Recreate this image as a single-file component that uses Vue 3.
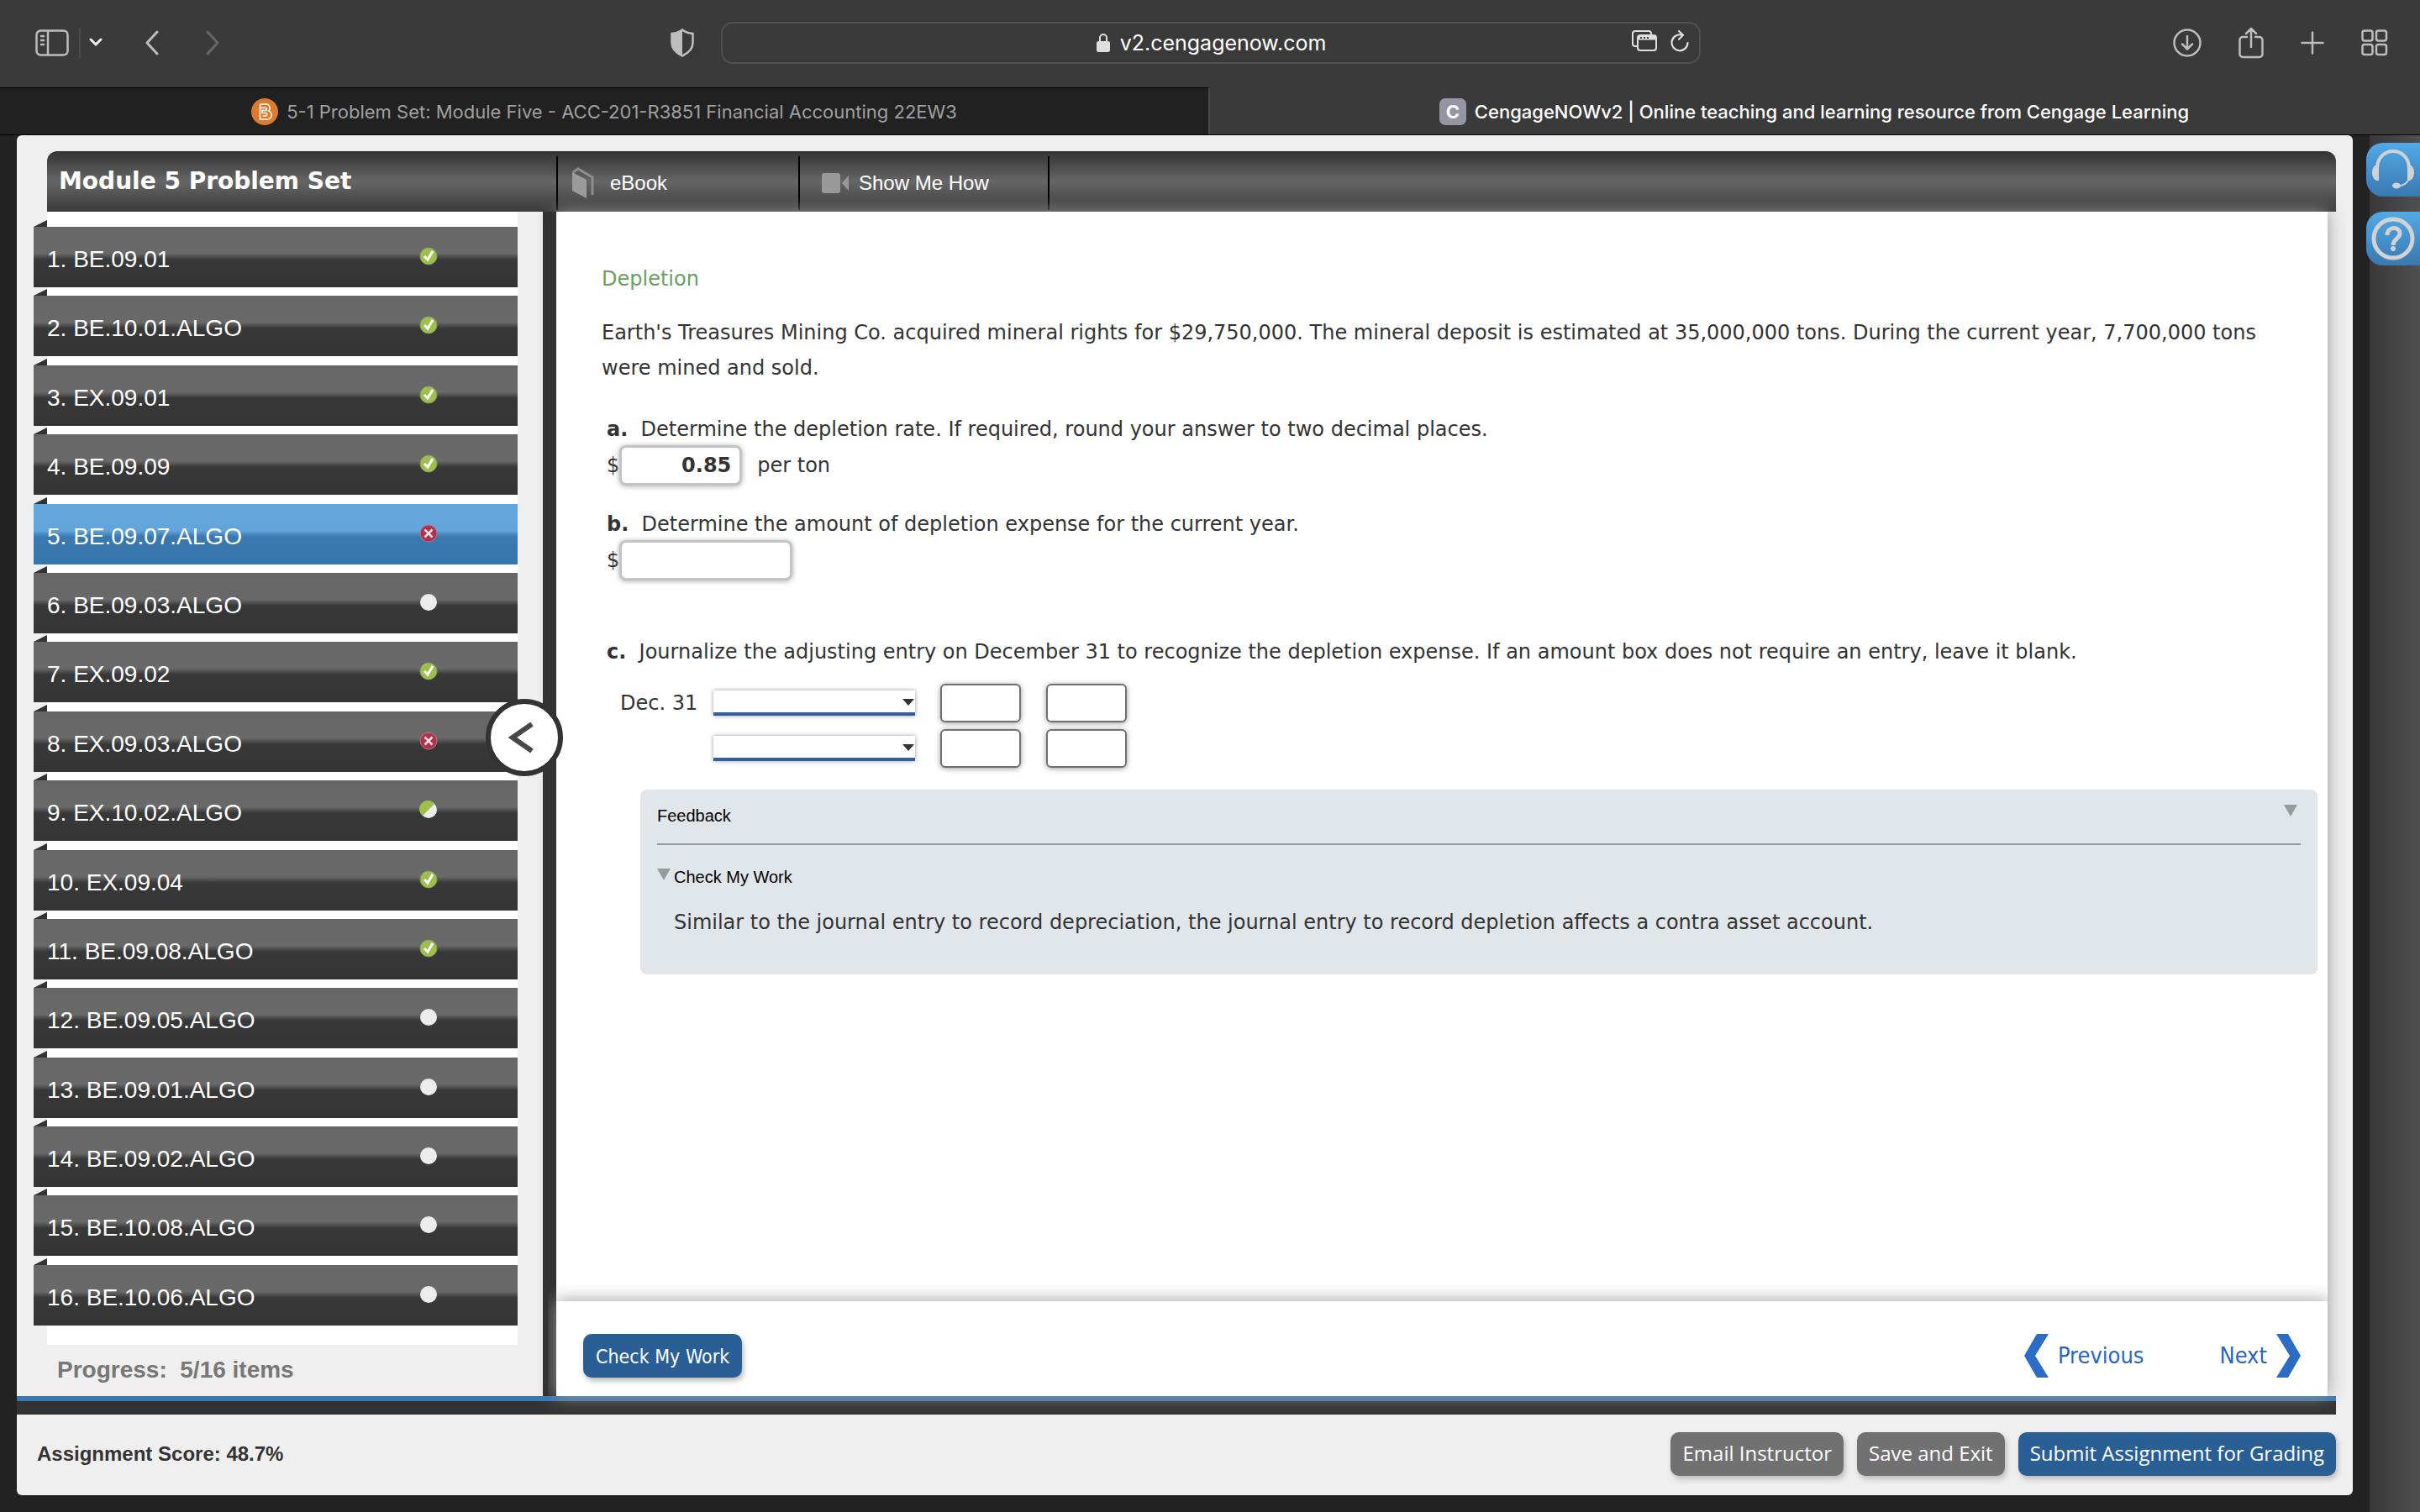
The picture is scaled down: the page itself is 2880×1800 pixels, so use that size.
<script setup>
import { ref } from 'vue'

// status: ok, wrong, empty, half
const items = [
  { name: 'BE.09.01', status: 'ok' },
  { name: 'BE.10.01.ALGO', status: 'ok' },
  { name: 'EX.09.01', status: 'ok' },
  { name: 'BE.09.09', status: 'ok' },
  { name: 'BE.09.07.ALGO', status: 'wrong' },
  { name: 'BE.09.03.ALGO', status: 'empty' },
  { name: 'EX.09.02', status: 'ok' },
  { name: 'EX.09.03.ALGO', status: 'wrong' },
  { name: 'EX.10.02.ALGO', status: 'half' },
  { name: 'EX.09.04', status: 'ok' },
  { name: 'BE.09.08.ALGO', status: 'ok' },
  { name: 'BE.09.05.ALGO', status: 'empty' },
  { name: 'BE.09.01.ALGO', status: 'empty' },
  { name: 'BE.09.02.ALGO', status: 'empty' },
  { name: 'BE.10.08.ALGO', status: 'empty' },
  { name: 'BE.10.06.ALGO', status: 'empty' }
]

const current = ref(4)
const rate = ref('0.85')
const expense = ref('')

const entries = ref([
  { date: 'Dec. 31', account: '', debit: '', credit: '' },
  { date: '', account: '', debit: '', credit: '' }
])
</script>

<template>
  <div class="browser">
    <header class="toolbar">
      <div class="tools tools-left">
        <button class="icon-btn" aria-label="Sidebar">
          <svg width="40" height="32" viewBox="0 0 40 32" fill="none" stroke="currentColor" stroke-width="2.5">
            <rect x="1.5" y="1.5" width="37" height="29" rx="5" />
            <path d="M15 2v28M6 8h5M6 13h5M6 18h5" />
          </svg>
        </button>
        <span class="tool-line"></span>
        <button class="icon-btn bright" aria-label="Tab groups">
          <svg width="16" height="12" viewBox="0 0 16 12" fill="none" stroke="currentColor" stroke-width="3" stroke-linecap="round" stroke-linejoin="round">
            <path d="M2 2l6 6 6-6" />
          </svg>
        </button>
        <button class="icon-btn back" aria-label="Back">
          <svg width="18" height="30" viewBox="0 0 18 30" fill="none" stroke="currentColor" stroke-width="3" stroke-linecap="round" stroke-linejoin="round">
            <path d="M15 2L3 15l12 13" />
          </svg>
        </button>
        <button class="icon-btn forward" aria-label="Forward">
          <svg width="18" height="30" viewBox="0 0 18 30" fill="none" stroke="currentColor" stroke-width="3" stroke-linecap="round" stroke-linejoin="round">
            <path d="M3 2l12 13L3 28" />
          </svg>
        </button>
      </div>

      <div class="address-area">
        <button class="icon-btn" aria-label="Privacy report">
          <svg width="28" height="34" viewBox="0 0 28 34">
            <path d="M14 1.5c3 2.5 7.5 4 12.5 4.5v11c0 7-5 12-12.5 15.5C6.5 29 1.5 24 1.5 17V6C6.5 5.5 11 4 14 1.5z" fill="none" stroke="currentColor" stroke-width="2.5" />
            <path d="M14 1.5v31C6.5 29 1.5 24 1.5 17V6C6.5 5.5 11 4 14 1.5z" fill="currentColor" />
          </svg>
        </button>
        <div class="address">
          <div class="address-text">
            <svg width="16" height="24" viewBox="0 0 16 24">
              <path d="M4 11V6a4 4 0 0 1 8 0v5" fill="none" stroke="#dedede" stroke-width="2" />
              <rect x="0" y="10" width="16" height="13" rx="2.5" fill="#dedede" />
            </svg>
            <span>v2.cengagenow.com</span>
          </div>
          <div class="address-tools">
            <svg width="30" height="26" viewBox="0 0 30 26" fill="none" stroke="#dedede" stroke-width="2">
              <path d="M6 19H4a3 3 0 0 1-3-3V4a3 3 0 0 1 3-3h16a3 3 0 0 1 3 3v1" />
              <rect x="7" y="6" width="22" height="18" rx="3" />
              <path d="M8 9h20" stroke-width="5" />
              <path d="M10 9h2M14 9h2M18 9h2" stroke="#3a3a3a" />
            </svg>
            <svg width="22" height="26" viewBox="0 0 22 26" fill="none" stroke="#dedede" stroke-width="2.2" stroke-linecap="round" stroke-linejoin="round">
              <path d="M13 5.5A9.5 9.5 0 1 0 20.5 15M10 1l5 4.700-5 5" />
            </svg>
          </div>
        </div>
      </div>

      <div class="tools tools-right">
        <button class="icon-btn" aria-label="Downloads">
          <svg width="34" height="34" viewBox="0 0 34 34" fill="none" stroke="currentColor" stroke-width="2.5" stroke-linecap="round" stroke-linejoin="round">
            <circle cx="17" cy="17" r="15.5" />
            <path d="M17 9v15M11 18.5l6 6 6-6" />
          </svg>
        </button>
        <button class="icon-btn" aria-label="Share">
          <svg width="30" height="38" viewBox="0 0 30 38" fill="none" stroke="currentColor" stroke-width="2.5" stroke-linecap="round" stroke-linejoin="round">
            <path d="M10 12H5a3.5 3.5 0 0 0-3.5 3.5v17A3.5 3.5 0 0 0 5 36h20a3.5 3.5 0 0 0 3.5-3.5v-17A3.5 3.5 0 0 0 25 12h-5M15 24V2M9 8l6-6 6 6" />
          </svg>
        </button>
        <button class="icon-btn" aria-label="New tab">
          <svg width="28" height="28" viewBox="0 0 28 28" fill="none" stroke="currentColor" stroke-width="2.5" stroke-linecap="round">
            <path d="M14 1.5v25M1.5 14h25" />
          </svg>
        </button>
        <button class="icon-btn" aria-label="Tab overview">
          <svg width="32" height="32" viewBox="0 0 32 32" fill="none" stroke="currentColor" stroke-width="2.5">
            <rect x="1.5" y="1.5" width="12" height="12" rx="2.5" />
            <rect x="18" y="1.5" width="12" height="12" rx="2.5" />
            <rect x="1.5" y="18" width="12" height="12" rx="2.5" />
            <rect x="18" y="18" width="12" height="12" rx="2.5" />
          </svg>
        </button>
      </div>
    </header>

    <nav class="tabs">
      <a href="#" class="tab">
        <svg width="32" height="32" viewBox="0 0 32 32">
          <circle cx="16" cy="16" r="16" fill="#dd7a2e" />
          <path d="M10.5 7h7a4.500 4.500 0 0 1 3 8 5 5 0 0 1-3 10h-7V11.500M10.500 7v4.500h6.500a1.500 1.500 0 0 1 0 3H13v3h4a1.500 1.500 0 0 1 0 3.500h-3.500" fill="none" stroke="#fff" stroke-width="1.5" />
        </svg>
        <span>5-1 Problem Set: Module Five - ACC-201-R3851 Financial Accounting 22EW3</span>
      </a>
      <a href="#" class="tab active">
        <span class="favicon">C</span>
        <span>CengageNOWv2 | Online teaching and learning resource from Cengage Learning</span>
      </a>
    </nav>

    <div class="viewport">
      <div class="frame">
        <div class="module-bar">
          <h1>Module 5 Problem Set</h1>
          <a href="#" class="module-link ebook">
            <svg width="28" height="38" viewBox="0 0 28 38">
              <path d="M1 6l17 9v22L1 28z" fill="#9b9b9b" />
              <path d="M2 6l6-4 17 10v21" fill="none" stroke="#8e8e8e" stroke-width="3" />
            </svg>
            eBook
          </a>
          <a href="#" class="module-link">
            <svg width="32" height="24" viewBox="0 0 32 24" fill="#999">
              <rect width="22" height="24" rx="3" />
              <path d="M24 12l8-9v18z" />
            </svg>
            Show Me How
          </a>
        </div>

        <div class="workspace">
          <aside class="sidebar">
            <ul class="items">
              <li v-for="(item, i) in items" :key="item.name">
                <a href="#" :class="['item', { current: i === current }]" @click.prevent="current = i">
                  <span>{{ i + 1 }}. {{ item.name }}</span>
                  <svg class="status" width="22" height="22" viewBox="0 0 22 22">
                    <circle cx="11" cy="11" r="10" :class="item.status" />
                    <path v-if="item.status === 'ok'" d="M6 11l4 4 6-10" stroke="#fff" stroke-width="3" fill="none" />
                    <path v-if="item.status === 'wrong'" d="M6.5 6.5l9 9M15.5 6.5l-9 9" stroke="#f5e6ea" stroke-width="2.5" fill="none" />
                    <path v-if="item.status === 'half'" d="M18 4A10 10 0 1 0 4 18z" fill="#9dbf4b" />
                  </svg>
                </a>
              </li>
            </ul>
            <p class="progress">Progress:&nbsp; 5/16 items</p>
          </aside>

          <div class="divider">
            <button class="collapse" aria-label="Collapse list">
              <svg width="30" height="38" viewBox="0 0 30 38" fill="none" stroke="#484848" stroke-width="6">
                <path d="M28 3L5 19l23 16" />
              </svg>
            </button>
          </div>

          <main class="content">
            <div class="question">
              <h2>Depletion</h2>
              <p class="intro">Earth's Treasures Mining Co. acquired mineral rights for $29,750,000. The mineral deposit is estimated at 35,000,000 tons. During the current year, 7,700,000 tons were mined and sold.</p>

              <div class="part">
                <label for="rate"><b>a.</b>&nbsp; Determine the depletion rate. If required, round your answer to two decimal places.</label>
                <div class="answer">
                  <span>$</span><input id="rate" v-model="rate" class="box rate" type="text"><span class="unit">per ton</span>
                </div>
              </div>

              <div class="part">
                <label for="expense"><b>b.</b>&nbsp; Determine the amount of depletion expense for the current year.</label>
                <div class="answer">
                  <span>$</span><input id="expense" v-model="expense" class="box" type="text">
                </div>
              </div>

              <p class="part-c"><b>c.</b>&nbsp; Journalize the adjusting entry on December 31 to recognize the depletion expense. If an amount box does not require an entry, leave it blank.</p>

              <table class="journal">
                <tbody>
                  <tr v-for="(entry, i) in entries" :key="i">
                    <td class="date">{{ entry.date }}</td>
                    <td class="account">
                      <div class="select-wrap">
                        <select v-model="entry.account" :aria-label="`Account ${i + 1}`">
                          <option value=""></option>
                        </select>
                        <svg class="arrow" width="14" height="8" viewBox="0 0 14 8"><path d="M0 0h14L7 8z" fill="#333" /></svg>
                      </div>
                    </td>
                    <td class="amount"><input v-model="entry.debit" type="text" :aria-label="`Debit ${i + 1}`"></td>
                    <td class="amount"><input v-model="entry.credit" type="text" :aria-label="`Credit ${i + 1}`"></td>
                  </tr>
                </tbody>
              </table>

              <section class="feedback">
                <div class="feedback-head">
                  <h3>Feedback</h3>
                  <svg width="16" height="14" viewBox="0 0 16 14"><path d="M0 0h16L8 14z" fill="#969c9e" /></svg>
                </div>
                <div class="feedback-title">
                  <svg width="16" height="14" viewBox="0 0 16 14"><path d="M0 0h16L8 14z" fill="#969c9e" /></svg>
                  <h3>Check My Work</h3>
                </div>
                <p>Similar to the journal entry to record depreciation, the journal entry to record depletion affects a contra asset account.</p>
              </section>
            </div>

            <div class="actions">
              <button class="btn blue check">Check My Work</button>
              <div class="pager">
                <a href="#">
                  <svg width="30" height="52" viewBox="0 0 30 52" fill="#2b6cc4"><path d="M15 0h14L13 26l16 26H15L0 26z" /></svg>
                  Previous
                </a>
                <a href="#">
                  Next
                  <svg width="30" height="52" viewBox="0 0 30 52" fill="#2b6cc4"><path d="M15 0H1l16 26L1 52h14l15-26z" /></svg>
                </a>
              </div>
            </div>
          </main>
        </div>

        <footer class="footer">
          <strong>Assignment Score: 48.7%</strong>
          <div class="footer-buttons">
            <button class="btn">Email Instructor</button>
            <button class="btn">Save and Exit</button>
            <button class="btn blue">Submit Assignment for Grading</button>
          </div>
        </footer>
      </div>

      <div class="backdrop">
        <button class="help" aria-label="Support">
          <svg width="54" height="54" viewBox="0 0 54 54" fill="none" stroke="#d2d2d2">
            <path d="M8 26C8 -2 46 -2 46 26" stroke-width="4" />
            <path d="M9 22v17c-8 0-8-17 0-17zM45 22v17c8 0 8-17 0-17z" fill="#d2d2d2" stroke-width="2" />
            <path d="M46 38c-2 5-7 8-14 9" stroke-width="2" />
            <ellipse cx="31" cy="46" rx="5" ry="3.5" fill="#d2d2d2" stroke="none" />
          </svg>
        </button>
        <button class="help" aria-label="Help">
          <svg width="54" height="54" viewBox="0 0 54 54" fill="none" stroke="#d2d2d2">
            <circle cx="27" cy="27" r="23" stroke-width="5" />
            <path d="M20 23c0-11 15-11 15-2 0 6-8 6-8 14" stroke-width="5" />
            <circle cx="27" cy="39" r="3" fill="#d2d2d2" stroke="none" />
          </svg>
        </button>
      </div>
    </div>
  </div>
</template>

<style>
body {
  margin: 0;
  background: #222;
}
</style>

<style scoped>
.browser {
  display: flex;
  flex-direction: column;
  min-height: 100vh;
  background: #222;
  color: #333;
  font-family: Verdana, "DejaVu Sans", sans-serif;
  font-size: 24px;
}

* {
  box-sizing: border-box;
}

svg {
  display: block;
  flex: none;
}

h1, h2, h3, p, ul {
  margin: 0;
  padding: 0;
}

a {
  color: inherit;
  text-decoration: none;
}

button, input, select {
  font: inherit;
  color: inherit;
}

/* Browser chrome */
.toolbar {
  display: grid;
  grid-template-columns: 12fr 1226px 13fr;
  align-items: center;
  height: 104px;
  padding: 0 38px 2px 42px;
  background: #3a3a3a;
}

.tools {
  display: flex;
  align-items: center;
}

.tools-right {
  justify-content: flex-end;
  gap: 44px;
}

.icon-btn {
  padding: 0;
  border: 0;
  background: none;
  color: #bdbdbd;
}

.tool-line {
  width: 2px;
  height: 36px;
  margin: 0 10px 0 12px;
  background: #4b4b4b;
}

.bright {
  color: #eee;
}

.back {
  margin-left: 50px;
}

.forward {
  margin-left: 54px;
  color: #666;
}

.address-area {
  display: flex;
  align-items: center;
  gap: 32px;
}

.address {
  display: flex;
  align-items: center;
  flex: 1;
  height: 50px;
  padding: 0 12px;
  border: 2px solid #505050;
  border-radius: 14px;
}

.address-text {
  display: flex;
  align-items: center;
  justify-content: center;
  flex: 1;
  gap: 12px;
  padding-left: 70px;
  color: #fff;
  font: 25px/32px Inter, sans-serif;
}

.address-tools {
  display: flex;
  gap: 16px;
  padding-bottom: 4px;
}

.tabs {
  display: grid;
  grid-template-columns: 1fr 1fr;
  height: 57px;
  border-bottom: 1px solid #000;
  background: #3a3a3a;
  font: 22px/28px Inter, sans-serif;
}

.tab {
  display: flex;
  align-items: center;
  justify-content: center;
  gap: 10px;
  border-top: 1px solid #000;
  border-right: 2px solid #4a4a4a;
  background: #212121;
  color: #a0a0a0;
}

.tab.active {
  border-color: #3a3a3a;
  background: #3a3a3a;
  color: #fff;
  font-weight: 500;
}

.favicon {
  width: 32px;
  height: 32px;
  border-radius: 7px;
  background: #9595a3;
  font-weight: 700;
  line-height: 32px;
  text-align: center;
}

/* Page */
.viewport {
  display: flex;
  flex: 1;
  gap: 20px;
  padding-left: 20px;
}

.frame {
  display: flex;
  flex-direction: column;
  flex: 1;
  margin-bottom: 20px;
  border-radius: 6px;
  background: #efefef;
}

.module-bar {
  display: flex;
  height: 72px;
  margin: 19px 20px 0 36px;
  border-radius: 12px 12px 0 0;
  background: linear-gradient(#333, #666 50%, #444 88%, #3a3a3a);
  color: #fff;
}

.module-bar h1 {
  width: 606px;
  padding-left: 14px;
  font-size: 28px;
  line-height: 72px;
}

.module-link {
  display: flex;
  align-items: center;
  gap: 12px;
  width: 297px;
  margin: 6px 0 2px;
  padding: 0 0 0 26px;
  border-right: 2px solid #000;
  font: 24px/30px "Liberation Sans", Arial, sans-serif;
}

.module-link.ebook {
  width: 290px;
  gap: 18px;
  padding-left: 16px;
  border-left: 2px solid #000;
}

/* blue and dark rules run under the whole workspace */
.workspace {
  display: flex;
  flex: 1;
  margin: 0 20px 22px 0;
  box-shadow: 0 6px 0 #3a78b0, 0 22px 0 #333;
}

.sidebar {
  display: flex;
  flex-direction: column;
  width: 626px;
  background: #efefef;
  font-family: "Liberation Sans", Arial, sans-serif;
  font-size: 28px;
}

.items {
  display: flex;
  flex: 1;
  flex-direction: column;
  justify-content: space-between;
  margin: 0 30px 0 36px;
  padding: 18px 0 23px;
  background: #fff;
  list-style: none;
}

.item {
  position: relative;
  display: flex;
  align-items: center;
  justify-content: space-between;
  height: 72px;
  margin-left: -16px;
  padding: 6px 95px 0 16px;
  background: linear-gradient(#666 0%, #696969 44%, #383838 54%, #343434 100%);
  color: #fff;
}

.item.current {
  background: linear-gradient(#62a7dd 0%, #62a5db 44%, #3a78b0 54%, #3876ae 100%);
}

/* folded corner */
.item::before {
  content: "";
  position: absolute;
  left: 0;
  top: -8px;
  border-bottom: 8px solid #333;
  border-left: 16px solid transparent;
}

.status {
  margin-bottom: 8px;
}

.status .ok {
  fill: #9dbf4b;
  stroke: #8a9a68;
}

.status .wrong {
  fill: #b5304c;
  stroke: #a08088;
}

.status .empty,
.status .half {
  fill: #ececec;
}

.progress {
  padding: 14px 0 15px 48px;
  color: #777;
  font-weight: 700;
  line-height: 32px;
}

.divider {
  position: relative;
  z-index: 2;
  width: 16px;
  background: #333;
}

.collapse {
  position: absolute;
  left: -68px;
  top: 580px;
  display: flex;
  align-items: center;
  justify-content: center;
  width: 92px;
  height: 92px;
  padding: 0 8px 0 0;
  border: 6px solid #333;
  border-radius: 50%;
  background: #fff;
}

.content {
  position: relative;
  display: flex;
  flex: 1;
  flex-direction: column;
  margin-right: 10px;
  background: #fff;
  box-shadow: 0 0 20px #999;
}

.question {
  flex: 1;
  padding: 59px 12px 0 54px;
}

.question h2 {
  color: #69a060;
  font-size: 24px;
  font-weight: 400;
  line-height: 42px;
}

.intro {
  margin-top: 22px;
  padding-right: 40px;
  line-height: 42px;
}

.part {
  margin-top: 28px;
  padding-left: 6px;
}

.part label {
  display: block;
  line-height: 36px;
}

.intro + .part {
  margin-top: 34px;
}

.answer {
  display: flex;
  align-items: center;
  height: 48px;
  margin-top: 1px;
}

.box {
  width: 206px;
  height: 48px;
  padding: 0 10px;
  border: 3px solid #c4c4c4;
  border-radius: 8px;
  background: #fff;
  box-shadow: 0 1px 6px #aaa;
  font-weight: 700;
  text-align: right;
}

.rate {
  width: 146px;
}

.unit {
  margin-left: 18px;
}

.part-c {
  margin-top: 64px;
  padding-left: 6px;
  line-height: 42px;
}

.journal {
  margin: 13px 0 0 22px;
  border-collapse: collapse;
}

.journal td {
  height: 54px;
  padding: 0;
}

.date {
  width: 111px;
}

.account {
  width: 270px;
}

.select-wrap {
  position: relative;
  width: 240px;
}

select {
  display: block;
  width: 240px;
  height: 30px;
  border: 0;
  border-bottom: 4px solid #30609a;
  border-radius: 0;
  background: #fff;
  box-shadow: 0 0 5px #999;
  appearance: none;
}

.arrow {
  position: absolute;
  right: 1px;
  top: 10px;
}

.amount {
  width: 126px;
}

.amount input {
  display: block;
  width: 96px;
  height: 46px;
  padding: 0 8px;
  border: 2px solid #707070;
  border-radius: 6px;
  background: #fff;
  box-shadow: 0 1px 6px #999;
  text-align: right;
}

.feedback {
  height: 220px;
  margin: 22px 0 0 46px;
  padding: 0 20px;
  border-radius: 8px;
  background: #e0e6e9;
}

.feedback h3 {
  color: #000;
  font: 20px/20px "Liberation Sans", Arial, sans-serif;
}

.feedback-head {
  display: flex;
  justify-content: space-between;
  height: 66px;
  padding: 18px 4px 0 0;
  border-bottom: 2px solid #949a9d;
}

.feedback-head h3 {
  padding-top: 3px;
}

.feedback-title {
  display: flex;
  gap: 4px;
  padding-top: 28px;
}

.feedback p {
  padding-left: 20px;
  margin-top: 23px;
  line-height: 42px;
}

.actions {
  position: relative;
  z-index: 3;
  display: flex;
  align-items: center;
  justify-content: space-between;
  height: 113px;
  padding: 24px 32px 8px;
  background: #fff;
  box-shadow: 0 0 20px #999;
  clip-path: inset(-20px 0 0 -10px);
}

.btn {
  height: 52px;
  padding: 0 14px 2px;
  border: 0;
  border-radius: 10px;
  background: #717171;
  box-shadow: 2px 4px 6px #bbb;
  color: #fff;
  font: 24px/30px "Open Sans", sans-serif;
}

.btn.blue {
  background: #2a5f96;
}

.btn.check {
  padding: 2px 15px 0;
  font: 23px/30px Tahoma, "DejaVu Sans Condensed", "Open Sans", sans-serif;
}

.pager {
  display: flex;
  gap: 90px;
  color: #2b66bd;
  font: 27px/40px Tahoma, "DejaVu Sans Condensed", "Open Sans", sans-serif;
}

.pager a {
  display: flex;
  align-items: center;
  gap: 10px;
}

.footer {
  display: flex;
  align-items: center;
  justify-content: space-between;
  height: 96px;
  padding: 0 20px 2px 24px;
  font: 24px/30px "Liberation Sans", Arial, sans-serif;
}

.footer-buttons {
  display: flex;
  gap: 16px;
}

.backdrop {
  width: 60px;
  background: linear-gradient(90deg, #383838, #505050);
}

.help {
  position: relative;
  left: -4px;
  display: flex;
  align-items: center;
  width: 64px;
  height: 64px;
  margin: 9px 0 18px;
  padding: 0 5px;
  border: 0;
  border-radius: 20px 0 0 20px;
  background: linear-gradient(#50aae8, #3a78b0);
}

.help + .help {
  margin-top: 0;
}
</style>
